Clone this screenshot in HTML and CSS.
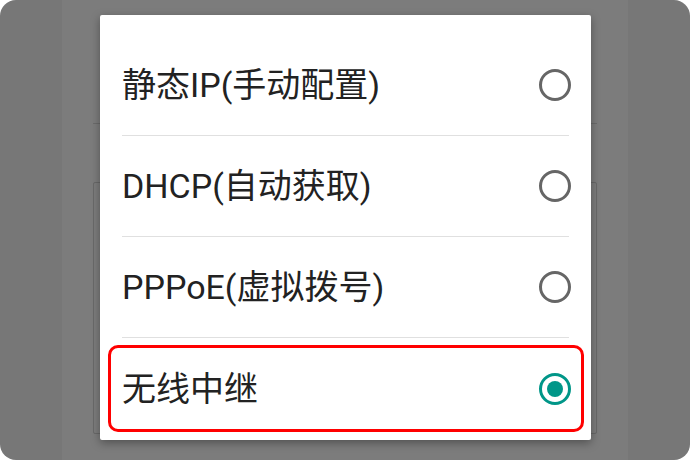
FILE: index.html
```html
<!DOCTYPE html>
<html lang="zh-CN">
<head>
<meta charset="utf-8">
<title>网络模式</title>
<link rel="stylesheet" href="styles.css">
</head>
<body>
<div class="screen">
  <div class="page">
    <div class="page-line"></div>
    <div class="page-card"></div>
  </div>
  <div class="dialog">
    <div class="option">
      <span class="label">静态IP(手动配置)</span>
      <span class="radio"></span>
    </div>
    <div class="divider"></div>
    <div class="option">
      <span class="label">DHCP(自动获取)</span>
      <span class="radio"></span>
    </div>
    <div class="divider"></div>
    <div class="option">
      <span class="label">PPPoE(虚拟拨号)</span>
      <span class="radio"></span>
    </div>
    <div class="divider"></div>
    <div class="option option-last">
      <span class="label">无线中继</span>
      <span class="radio radio-on"></span>
    </div>
    <div class="highlight"></div>
  </div>
</div>
</body>
</html>
```
FILE: styles.css
```css
* { box-sizing: border-box; }
html, body { margin: 0; padding: 0; background: #ffffff; }
body { width: 690px; height: 460px; overflow: hidden; font-family: Roboto, "Noto Sans CJK SC", sans-serif; }

.screen {
  position: relative;
  width: 690px;
  height: 460px;
  border-radius: 16px;
  background: #777777;
  overflow: hidden;
}

.page {
  margin: 0 62px;
  height: 460px;
  background: #7c7c7c;
  padding: 123px 31px 0 31px;
}
.page-line {
  height: 1px;
  background: #6b6b6b;
}
.page-card {
  margin-top: 58px;
  height: 252px;
  border: 1px solid #696969;
  border-radius: 2px;
}

.dialog {
  position: absolute;
  left: 100px;
  top: 15px;
  width: 491px;
  height: 425px;
  background: #ffffff;
  border-radius: 2px;
  box-shadow: 0 3px 10px rgba(0, 0, 0, 0.35);
  padding-top: 20px;
  display: flex;
  flex-direction: column;
}

.option {
  height: 100px;
  display: flex;
  align-items: center;
  justify-content: space-between;
  padding: 0 20px 0 22px;
}
.option-last { height: 101px; }

.label {
  font-size: 34px;
  color: #222222;
  line-height: 1;
}

.radio {
  width: 32px;
  height: 32px;
  border: 3px solid #666666;
  border-radius: 50%;
  display: flex;
  align-items: center;
  justify-content: center;
  flex: none;
}
.radio-on { border-color: #009688; }
.radio-on::after {
  content: "";
  width: 16px;
  height: 16px;
  border-radius: 50%;
  background: #009688;
}

.divider {
  height: 1px;
  margin: 0 22px;
  background: #e0e0e0;
}

.highlight {
  position: absolute;
  left: 8px;
  top: 330px;
  width: 476px;
  height: 87px;
  border: 3px solid #ff0000;
  border-radius: 10px;
  pointer-events: none;
}
```
